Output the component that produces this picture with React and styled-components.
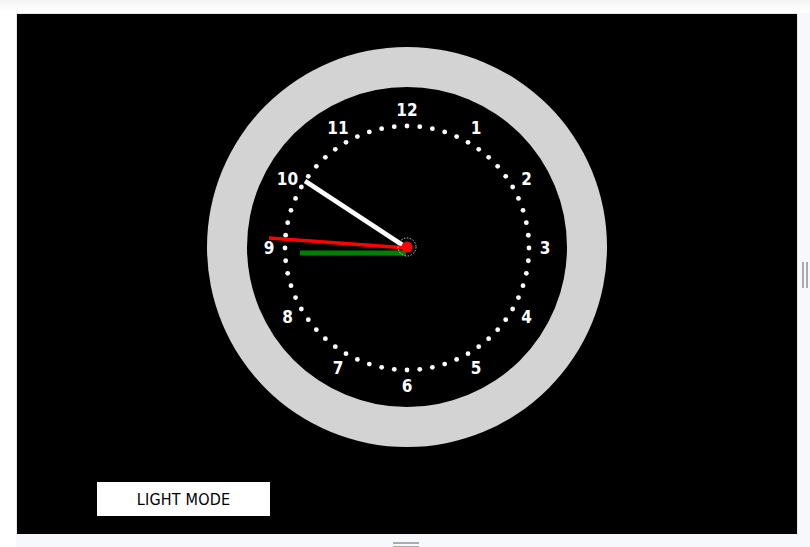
import React from 'react';
import styled, { createGlobalStyle } from 'styled-components';

const GlobalStyle = createGlobalStyle`
  html, body {
    margin: 0;
    padding: 0;
    background: #ffffff;
  }
  body {
    font-family: "DejaVu Sans Condensed", "DejaVu Sans", sans-serif;
  }
`;

const Page = styled.div`
  width: 810px;
  height: 547px;
  padding: 13px 0 0 16px;
  box-sizing: border-box;
  background: linear-gradient(to bottom, #f4f4f4 0px, #ffffff 12px);
  overflow: hidden;
`;

const Stage = styled.div`
  background: #f7f8fc;
  height: 100%;
  display: flex;
  flex-direction: column;
`;

const Row = styled.div`
  display: flex;
`;

const Panel = styled.div`
  width: 782px;
  height: 521px;
  box-sizing: border-box;
  background: #000;
  border: 1px solid #e8e8e8;
  border-bottom: none;
  display: flex;
  flex-direction: column;
  padding-top: 33px;
`;

const ClockBox = styled.div`
  align-self: center;
  width: 400px;
  height: 400px;
`;

const ModeButton = styled.button`
  margin: 35px 0 0 80px;
  width: 173px;
  height: 34px;
  border: none;
  background: #fff;
  color: #000;
  font-family: "DejaVu Sans Condensed", "DejaVu Sans", sans-serif;
  font-size: 16px;
  letter-spacing: 0.2px;
  padding: 0;
`;

const SideResizer = styled.div`
  flex: 1;
  display: flex;
  align-items: center;
  justify-content: flex-end;
  padding-right: 2px;
`;

const VGrip = styled.div`
  width: 2px;
  height: 26px;
  margin-top: 2px;
  border-left: 2px solid #aaa;
  border-right: 2px solid #aaa;
`;

const BottomResizer = styled.div`
  flex: 1;
  display: flex;
  justify-content: center;
  padding-top: 8px;
  padding-right: 14px;
`;

const HGrip = styled.div`
  width: 26px;
  height: 2px;
  border-top: 2px solid #aaa;
  border-bottom: 2px solid #aaa;
`;

const CX = 200;
const CY = 201;

const Clock = () => {
  const dots = Array.from({ length: 60 }, (_, i) => {
    const a = (i / 60) * Math.PI * 2;
    return (
      <circle
        key={i}
        cx={CX + Math.sin(a) * 122}
        cy={CY - Math.cos(a) * 122}
        r={2.4}
        fill="#fff"
      />
    );
  });

  const nums = Array.from({ length: 12 }, (_, i) => {
    const n = i + 1;
    const a = (n / 12) * Math.PI * 2;
    return (
      <text
        key={n}
        x={CX + Math.sin(a) * 138}
        y={CY - Math.cos(a) * 138}
        fill="#fff"
        fontSize="17"
        fontWeight="600"
        textAnchor="middle"
        dominantBaseline="central"
        fontFamily='"DejaVu Sans Condensed", "DejaVu Sans", sans-serif'
      >
        {n}
      </text>
    );
  });

  return (
    <svg width="400" height="400" viewBox="0 0 400 400">
      <circle cx="200" cy="200" r="200" fill="#d3d3d3" />
      <circle cx="200" cy="200" r="160" fill="#000" />
      {dots}
      {nums}
      <line x1={CX} y1={CY} x2={CX - 102} y2={CY - 67} stroke="#fff" strokeWidth="4.5" />
      <line x1={CX} y1={CY} x2={CX - 138} y2={CY - 10} stroke="#ff0000" strokeWidth="3.5" />
      <rect x="93" y="203.5" width="106" height="5" fill="#008000" />
      <circle cx="200" cy="200" r="9" fill="none" stroke="#fff" strokeWidth="0.8" strokeDasharray="1.5 1.5" />
      <circle cx="200" cy="200" r="5.5" fill="#ff0000" />
    </svg>
  );
};

const App = () => (
  <>
    <GlobalStyle />
    <Page>
      <Stage>
        <Row>
          <Panel>
            <ClockBox>
              <Clock />
            </ClockBox>
            <ModeButton>LIGHT MODE</ModeButton>
          </Panel>
          <SideResizer>
            <VGrip />
          </SideResizer>
        </Row>
        <BottomResizer>
          <HGrip />
        </BottomResizer>
      </Stage>
    </Page>
  </>
);

export default App;
